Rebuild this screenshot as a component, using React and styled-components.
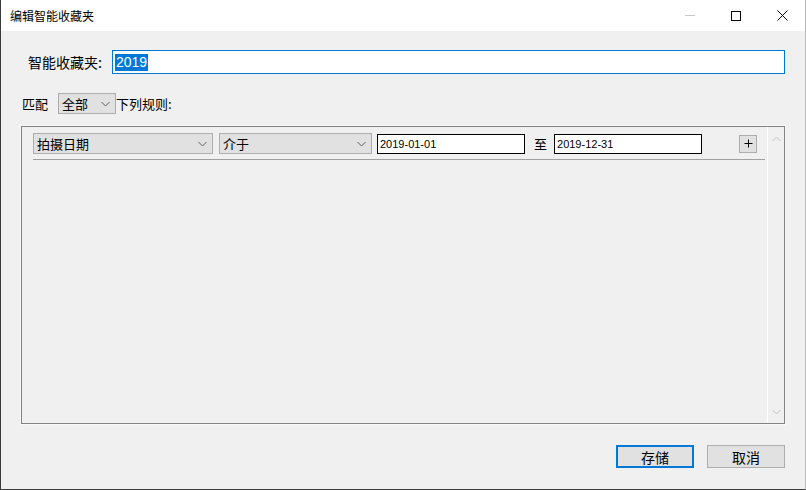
import { styled, createGlobalStyle } from "styled-components";

const GlobalStyle = createGlobalStyle`
  html, body {
    margin: 0;
    padding: 0;
    background: #f0f0f0;
  }
  * {
    box-sizing: border-box;
  }
`;

const cjk = `"Noto Sans CJK SC", "Liberation Sans", sans-serif`;
const latin = `"Liberation Sans", "Noto Sans CJK SC", sans-serif`;

const Window = styled.div`
  width: 806px;
  height: 490px;
  display: flex;
  flex-direction: column;
  background: #f0f0f0;
  border-left: 1px solid #3c3c3c;
  border-bottom: 1px solid #3c3c3c;
  border-right: 1px solid #b8b8b8;
  font-family: ${cjk};
  color: #000;
`;

const TitleBar = styled.div`
  height: 31px;
  flex-shrink: 0;
  display: flex;
  align-items: center;
  background: #fff;
`;

const Title = styled.div`
  flex: 1;
  padding-left: 9px;
  font-size: 12px;
  line-height: 31px;
`;

const Controls = styled.div`
  display: flex;
  height: 31px;
`;

const CtrlButton = styled.div`
  width: 46px;
  height: 31px;
  display: flex;
  align-items: center;
  justify-content: center;
`;

const Body = styled.div`
  flex: 1;
  display: flex;
  flex-direction: column;
  padding: 19px 20px 21px 20px;
`;

const NameRow = styled.div`
  display: flex;
  align-items: center;
  height: 24px;
  padding-left: 7px;
`;

const NameLabel = styled.label`
  font-size: 14px;
  width: 84px;
  white-space: nowrap;
`;

const NameInput = styled.div`
  flex: 1;
  height: 24px;
  background: #fff;
  border: 1px solid #0078d7;
  display: flex;
  align-items: center;
  padding-left: 2px;
`;

const Selected = styled.span`
  background: #0078d7;
  color: #fff;
  font-family: ${latin};
  font-size: 14px;
  line-height: 17px;
  padding: 0 1px;
`;

const MatchRow = styled.div`
  display: flex;
  align-items: center;
  margin-top: 19px;
  height: 21px;
  padding-left: 1px;
  font-size: 13px;
`;

const MatchText = styled.span`
  white-space: nowrap;
  margin-right: ${(p) => p.$gap || 0}px;
`;

const Select = styled.div`
  width: ${(p) => p.$w}px;
  height: 21px;
  display: flex;
  align-items: center;
  justify-content: space-between;
  background: #e1e1e1;
  border: 1px solid #adadad;
  padding: 0 5px 0 3px;
  font-size: 13px;
  flex-shrink: 0;
`;

const Panel = styled.div`
  margin-top: 12px;
  flex: 1;
  display: flex;
  border: 1px solid #828282;
  box-shadow: 0 0 0 1px #f8f8f8;
`;

const RuleArea = styled.div`
  flex: 1;
  padding: 6px 2px 0 11px;
  border-right: 1px solid #fff;
`;

const RuleRow = styled.div`
  display: flex;
  align-items: center;
  height: 21px;
  padding-right: 8px;
`;

const DateInput = styled.div`
  width: ${(p) => p.$w}px;
  height: 20px;
  background: #fff;
  border: 1px solid #000;
  font-family: ${latin};
  font-size: 11px;
  display: flex;
  align-items: center;
  padding-left: 2px;
  flex-shrink: 0;
`;

const To = styled.span`
  font-size: 13px;
  margin: 0 7px 0 9px;
`;

const PlusButton = styled.div`
  width: 18px;
  height: 18px;
  margin-left: auto;
  background: #e1e1e1;
  border: 1px solid #adadad;
  display: flex;
  align-items: center;
  justify-content: center;
`;

const Separator = styled.div`
  height: 1px;
  background: #a0a0a0;
  margin-top: 5px;
`;

const ScrollBar = styled.div`
  width: 16px;
  display: flex;
  flex-direction: column;
  justify-content: space-between;
  align-items: center;
  padding: 9px 0 8px;
`;

const Footer = styled.div`
  display: flex;
  justify-content: flex-end;
  gap: 13px;
  margin-top: 21px;
  padding-right: 0;
`;

const Button = styled.div`
  width: 78px;
  height: 23px;
  display: flex;
  align-items: center;
  justify-content: center;
  background: #e1e1e1;
  border: ${(p) => (p.$primary ? "2px solid #0078d7" : "1px solid #adadad")};
  font-size: 14px;
`;

const Chevron = ({ up, color = "#606060" }) => (
  <svg width="9" height="6" viewBox="0 0 9 6">
    <polyline
      points={up ? "0.5,5 4.5,1 8.5,5" : "0.5,1 4.5,5 8.5,1"}
      fill="none"
      stroke={color}
      strokeWidth="1"
    />
  </svg>
);

const App = () => {
  return (
    <>
      <GlobalStyle />
      <Window>
        <TitleBar>
          <Title>编辑智能收藏夹</Title>
          <Controls>
            <CtrlButton>
              <svg width="10" height="1" viewBox="0 0 10 1">
                <rect width="10" height="1" fill="#c8c8c8" />
              </svg>
            </CtrlButton>
            <CtrlButton>
              <svg width="10" height="10" viewBox="0 0 10 10">
                <rect x="0.5" y="0.5" width="9" height="9" fill="none" stroke="#000" />
              </svg>
            </CtrlButton>
            <CtrlButton>
              <svg width="11" height="11" viewBox="0 0 11 11">
                <path d="M0.5 0.5 L10.5 10.5 M10.5 0.5 L0.5 10.5" stroke="#000" strokeWidth="1" />
              </svg>
            </CtrlButton>
          </Controls>
        </TitleBar>
        <Body>
          <NameRow>
            <NameLabel>智能收藏夹:</NameLabel>
            <NameInput>
              <Selected>2019</Selected>
            </NameInput>
          </NameRow>
          <MatchRow>
            <MatchText $gap={10}>匹配</MatchText>
            <Select $w={58}>
              <span>全部</span>
              <Chevron />
            </Select>
            <MatchText>下列规则:</MatchText>
          </MatchRow>
          <Panel>
            <RuleArea>
              <RuleRow>
                <Select $w={180}>
                  <span>拍摄日期</span>
                  <Chevron />
                </Select>
                <Select $w={153} style={{ marginLeft: 6 }}>
                  <span>介于</span>
                  <Chevron />
                </Select>
                <DateInput $w={148} style={{ marginLeft: 5 }}>
                  2019-01-01
                </DateInput>
                <To>至</To>
                <DateInput $w={148}>2019-12-31</DateInput>
                <PlusButton>
                  <svg width="9" height="9" viewBox="0 0 9 9">
                    <path d="M4.5 0.5 V8.5 M0.5 4.5 H8.5" stroke="#000" strokeWidth="1" />
                  </svg>
                </PlusButton>
              </RuleRow>
              <Separator />
            </RuleArea>
            <ScrollBar>
              <Chevron up color="#c0c0c0" />
              <Chevron color="#c0c0c0" />
            </ScrollBar>
          </Panel>
          <Footer>
            <Button $primary>存储</Button>
            <Button>取消</Button>
          </Footer>
        </Body>
      </Window>
    </>
  );
};

export default App;
